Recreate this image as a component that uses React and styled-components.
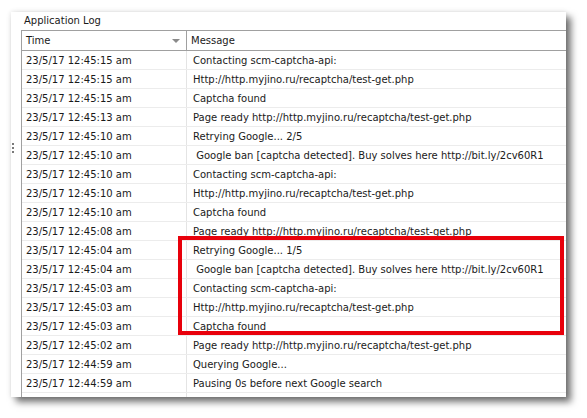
import React from "react";
import styled, { createGlobalStyle } from "styled-components";

const GlobalStyle = createGlobalStyle`
  html, body { margin: 0; padding: 0; background: #ffffff; }
  body { font-family: "DejaVu Sans", "Liberation Sans", sans-serif; }
`;

const Page = styled.div`
  position: relative;
  width: 587px;
  height: 418px;
  padding: 12px 0 0 11px;
  box-sizing: border-box;
  overflow: hidden;
`;

const Panel = styled.div`
  position: relative;
  width: 555px;
  height: 385px;
  background: #ffffff;
  display: flex;
  flex-direction: column;
  padding-left: 10px;
  box-sizing: border-box;
  overflow: hidden;
  box-shadow: 0 0 5px rgba(0, 0, 0, 0.12), 5px 5px 7px rgba(0, 0, 0, 0.55);
`;

const Title = styled.div`
  height: 18px;
  line-height: 18px;
  padding-left: 3px;
  font-size: 10px;
  color: #1a1a1a;
`;

const Table = styled.div`
  flex: 1;
  border-left: 1px solid #a0a0a0;
  overflow: hidden;
`;

const Header = styled.div`
  display: grid;
  grid-template-columns: 164px 1fr;
  height: 19px;
  border-top: 1px solid #a0a0a0;
  border-bottom: 1px solid #a0a0a0;
`;

const HeadCell = styled.div`
  position: relative;
  display: flex;
  align-items: center;
  padding-left: 4px;
  font-size: 10px;
  color: #1a1a1a;
  border-left: ${(p) => (p.$first ? "none" : "1px solid #a0a0a0")};
`;

const SortArrow = styled.span`
  position: absolute;
  right: 6px;
  top: 8px;
  width: 0;
  height: 0;
  border-left: 4px solid transparent;
  border-right: 4px solid transparent;
  border-top: 4px solid #8a8a8a;
`;

const Row = styled.div`
  display: grid;
  grid-template-columns: 164px 1fr;
  height: 18px;
  border-bottom: 1px solid #ececec;
`;

const Cell = styled.div`
  display: flex;
  align-items: center;
  padding-left: ${(p) => (p.$first ? "4px" : "6px")};
  font-size: 10px;
  white-space: pre;
  color: ${(p) => (p.$blue ? "#1a1ad8" : "#1a1a1a")};
  border-left: ${(p) => (p.$first ? "none" : "1px solid #e4e4e4")};
  overflow: hidden;
`;

const Grip = styled.div`
  position: absolute;
  left: 12px;
  top: 143px;
  display: flex;
  flex-direction: column;
  gap: 2px;
`;

const Dot = styled.span`
  width: 2px;
  height: 2px;
  background: #7a7a7a;
`;

const Highlight = styled.div`
  position: absolute;
  left: 178px;
  top: 236px;
  width: 386px;
  height: 99px;
  border: 4px solid #e8000b;
  box-sizing: border-box;
  pointer-events: none;
`;

const URL = "http://http.myjino.ru/recaptcha/test-get.php";

const rows = [
  ["23/5/17 12:45:15 am", "Contacting scm-captcha-api:"],
  ["23/5/17 12:45:15 am", "Http://http.myjino.ru/recaptcha/test-get.php"],
  ["23/5/17 12:45:15 am", "Captcha found"],
  ["23/5/17 12:45:13 am", "Page ready " + URL],
  ["23/5/17 12:45:10 am", "Retrying Google... 2/5"],
  ["23/5/17 12:45:10 am", " Google ban [captcha detected]. Buy solves here http://bit.ly/2cv60R1"],
  ["23/5/17 12:45:10 am", "Contacting scm-captcha-api:"],
  ["23/5/17 12:45:10 am", "Http://http.myjino.ru/recaptcha/test-get.php"],
  ["23/5/17 12:45:10 am", "Captcha found"],
  ["23/5/17 12:45:08 am", "Page ready " + URL],
  ["23/5/17 12:45:04 am", "Retrying Google... 1/5"],
  ["23/5/17 12:45:04 am", " Google ban [captcha detected]. Buy solves here http://bit.ly/2cv60R1"],
  ["23/5/17 12:45:03 am", "Contacting scm-captcha-api:"],
  ["23/5/17 12:45:03 am", "Http://http.myjino.ru/recaptcha/test-get.php"],
  ["23/5/17 12:45:03 am", "Captcha found"],
  ["23/5/17 12:45:02 am", "Page ready " + URL],
  ["23/5/17 12:44:59 am", "Querying Google..."],
  ["23/5/17 12:44:59 am", "Pausing 0s before next Google search"],
  ["23/5/17 12:44:59 am", "Found 1 results for 'Gothenburg'", true],
];

export default function App() {
  return (
    <>
      <GlobalStyle />
      <Page>
        <Panel>
          <Title>Application Log</Title>
          <Table>
            <Header>
              <HeadCell $first>
                Time
                <SortArrow />
              </HeadCell>
              <HeadCell>Message</HeadCell>
            </Header>
            {rows.map(([t, m, blue], i) => (
              <Row key={i}>
                <Cell $first>{t}</Cell>
                <Cell $blue={blue}>{m}</Cell>
              </Row>
            ))}
          </Table>
        </Panel>
        <Grip>
          <Dot />
          <Dot />
          <Dot />
        </Grip>
        <Highlight />
      </Page>
    </>
  );
}
